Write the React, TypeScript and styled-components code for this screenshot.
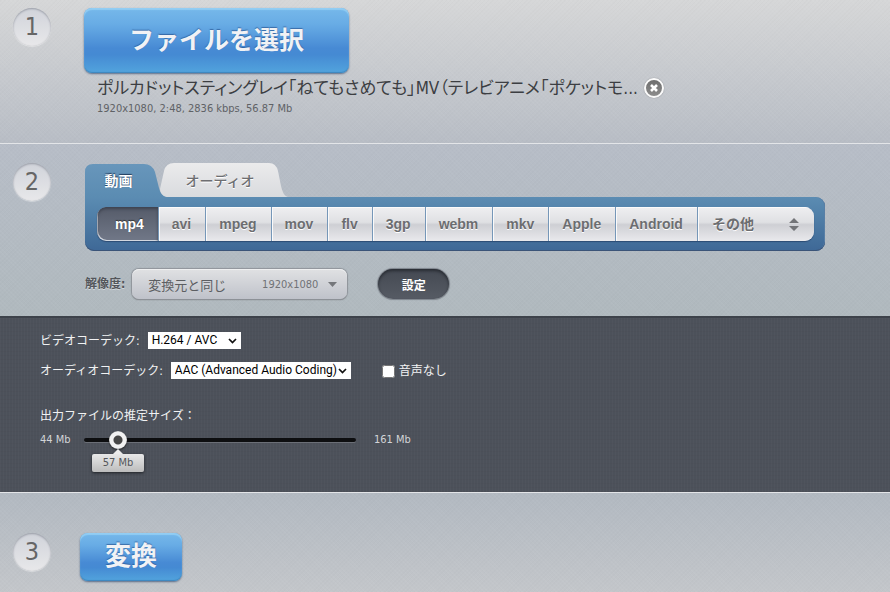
import React, { useState } from "react";
import styled, { createGlobalStyle, css } from "styled-components";

const ui = '"DejaVu Sans Condensed", "Noto Sans CJK JP", sans-serif';

const GlobalStyle = createGlobalStyle`
  *, *::before, *::after { box-sizing: border-box; }
  body {
    margin: 0;
    background: #c3c6ca;
    font-family: ${ui};
    font-size: 12px;
    line-height: 18px;
    color: #5f6266;
  }
  button, select, input { font-family: inherit; }
  button { border: 0; padding: 0; cursor: pointer; }
`;

const grain = `repeating-linear-gradient(45deg, rgba(255,255,255,0.03) 0 1px, transparent 1px 3px),
  repeating-linear-gradient(-45deg, rgba(0,0,0,0.01) 0 1px, transparent 1px 3px)`;

const Page = styled.main`
  display: flex;
  flex-direction: column;
  min-height: 100vh;
`;

const Step = styled.section<{ $from: string; $to: string; $pad: string; $gap?: number; $fill?: boolean }>`
  display: flex;
  align-items: flex-start;
  gap: ${(p) => p.$gap ?? 34}px;
  padding: ${(p) => p.$pad};
  border-top: 1px solid #e3e5e8;
  background: ${grain}, linear-gradient(${(p) => p.$from}, ${(p) => p.$to});
  ${(p) => p.$fill && css`flex: 1;`}

  &:first-child {
    border-top: 0;
  }
`;

const StepNumber = styled.div`
  flex: none;
  width: 38px;
  height: 38px;
  border-radius: 50%;
  background: linear-gradient(#d0d3da, #e8e8ea);
  box-shadow: inset 0 1px 2px rgba(70, 75, 90, 0.4), 0 1px 1px rgba(255, 255, 255, 0.4);
  color: #666;
  font-size: 25px;
  line-height: 38px;
  text-align: center;
`;

const StepBody = styled.div`
  flex: 1;
  min-width: 0;
`;

const PrimaryButton = styled.button<{ $wide?: boolean }>`
  display: block;
  padding: ${(p) => (p.$wide ? "14px 45px 19px" : "5px 25px 11px")};
  border-radius: 8px;
  background: linear-gradient(#76b8ea 0%, #68ace5 25%, #478ad4 62%, #458ad3 72%, #52a4dd 100%);
  box-shadow: inset 0 2px 1px #92cdf3, inset 0 -1px 1px #3e86bd, 0 1px 2px rgba(45, 70, 110, 0.7);
  color: #f1f2f5;
  font-family: "Noto Sans CJK JP", sans-serif;
  font-size: ${(p) => (p.$wide ? 25 : 26)}px;
  font-weight: 700;
  line-height: 32px;
  text-shadow: 0 -1px 1px rgba(30, 70, 130, 0.6);
`;

const FileRow = styled.div`
  display: flex;
  align-items: center;
  gap: 6px;
  padding: 3px 0 0 13px;
`;

const FileName = styled.span`
  overflow: hidden;
  color: #3c3e42;
  font-size: 17px;
  font-feature-settings: "palt";
  line-height: 24px;
  white-space: nowrap;
`;

const RemoveButton = styled.button`
  flex: none;
  display: grid;
  place-items: center;
  width: 20px;
  height: 20px;
  border: 2px solid #fafafa;
  border-radius: 50%;
  background: linear-gradient(#6e6e6e, #8c8c8c);
  box-shadow: 0 0 1px rgba(0, 0, 0, 0.5);
`;

const FileMeta = styled.div`
  padding-left: 13px;
  font-size: 11px;
`;

const Tabs = styled.div`
  display: flex;
  align-items: flex-end;
  height: 34px;
`;

const Tab = styled.button<{ $active?: boolean }>`
  position: relative;
  z-index: ${(p) => (p.$active ? 1 : 0)};
  width: ${(p) => (p.$active ? 81 : 131)}px;
  height: 34px;
  margin-right: ${(p) => (p.$active ? -9 : 0)}px;
  padding: ${(p) => (p.$active ? "0 14px 0 0" : "0 5px 0 0")};
  background: none;
  color: ${(p) => (p.$active ? "#fff" : "#6d6e71")};
  font-family: "Noto Sans CJK JP", sans-serif;
  font-size: 14px;
  font-weight: ${(p) => (p.$active ? 700 : 500)};
  line-height: 34px;
  text-shadow: ${(p) => (p.$active ? "0 -1px 1px #203a5a" : "0 1px 0 #fff")};
`;

const TabShape = styled.svg`
  position: absolute;
  inset: 0;
  z-index: -1;
  width: 100%;
  height: 100%;
`;

const FormatPanel = styled.div`
  max-width: 740px;
  padding: 10px 11px 10px 12px;
  border-radius: 0 9px 9px 9px;
  background: linear-gradient(#5b8cb2, #3e6896);
  box-shadow: inset 0 -1px 0 #3b5478, inset -1px 0 0 #587fa6;
`;

const FormatList = styled.div`
  display: flex;
  height: 34px;
  border-radius: 9px;
  overflow: hidden;
  background: #6c93b8;
  box-shadow: 0 1px 1px #2c4c75;
`;

const FormatButton = styled.button<{ $selected?: boolean }>`
  padding: 0 14px 0 13px;
  border-right: 1px solid #7697b8;
  box-shadow: inset 1px 1px 0 #fafafa;
  background: linear-gradient(#efeff1, #dfe0e3 45%, #cecfd4 52%, #e9e9ec);
  color: #6c6d70;
  font-family: "Liberation Sans", "Noto Sans CJK JP", sans-serif;
  font-size: 14px;
  font-weight: 700;
  line-height: 34px;
  text-shadow: 0 1px 0 #fff;
  ${(p) =>
    p.$selected &&
    css`
      padding: 0 14px 0 18px;
      border-radius: 9px 0 0 9px;
      background: linear-gradient(#555b69, #717888);
      box-shadow: inset 0 2px 3px #3e4350, inset 1px -1px 0 #d8dde5;
      color: #fff;
      text-shadow: 0 -1px 1px #333;
    `}
`;

const OtherFormats = styled(FormatButton)`
  flex: 1;
  display: flex;
  align-items: center;
  justify-content: space-between;
  padding: 0 15px 0 14px;
  border-right: 0;
`;

const OptionsRow = styled.div`
  display: flex;
  align-items: center;
  margin-top: 18px;
`;

const OptionLabel = styled.span`
  margin-right: 7px;
  color: #53565b;
  font-weight: 700;
  line-height: 20px;
  text-shadow: 0 1px 0 #d5d9dd;
`;

const ResolutionButton = styled.button`
  display: flex;
  align-items: center;
  width: 215px;
  height: 30px;
  margin-right: 31px;
  padding: 0 10px 0 16px;
  border-radius: 7px;
  background: linear-gradient(#e0e1e3, #bfc2ca);
  box-shadow: inset 0 1px 0 #eeeff0, 0 0 1px 1px #8f949b, 0 1px 1px #777;
  color: #5c5e62;
  font-size: 13px;
`;

const Dimensions = styled.span`
  margin: 0 10px 0 auto;
  color: #707276;
  font-size: 11px;
`;

const SettingsButton = styled.button`
  width: 71px;
  height: 30px;
  border-radius: 16px;
  background: linear-gradient(#444952, #565b64);
  box-shadow: inset 0 2px 3px #292d34, 0 0 1px 1px #7d838b;
  color: #fff;
  font-size: 12px;
  font-weight: 700;
`;

const Advanced = styled.section`
  padding: 14px 40px 19px 40px;
  border-top: 2px solid #3d424a;
  background: repeating-linear-gradient(90deg, rgba(255, 255, 255, 0.02) 0 1px, transparent 1px 3px),
    repeating-linear-gradient(0deg, rgba(0, 0, 0, 0.02) 0 1px, transparent 1px 4px), #4c515a;
  color: #f1f2f3;
`;

const Field = styled.div`
  display: flex;
  align-items: center;
  height: 18px;
  margin-bottom: 12px;
`;

const SelectBox = styled.div<{ $width: number }>`
  display: grid;
  grid-template-columns: 1fr 13px;
  align-items: center;
  align-self: flex-start;
  width: ${(p) => p.$width}px;
  height: 17px;
  margin-left: 8px;
  background: #fff;
`;

const CodecSelect = styled.select`
  grid-area: 1 / 1 / 2 / 3;
  appearance: none;
  height: 17px;
  padding: 0 0 0 4px;
  border: 0;
  background: transparent;
  color: #000;
  font-family: Roboto, sans-serif;
  font-size: 12px;
  line-height: 17px;
`;

const SelectArrow = styled.svg`
  grid-area: 1 / 2;
  pointer-events: none;
`;

const MuteLabel = styled.label`
  display: flex;
  align-items: center;
  gap: 4px;
  margin-left: 31px;
`;

const MuteBox = styled.input`
  width: 13px;
  height: 13px;
  margin: 0;
`;

const SizeTitle = styled.div`
  margin-top: 27px;
`;

const SizeRow = styled.div`
  display: flex;
  align-items: center;
  height: 18px;
  margin: 6px 0 24px;
  color: #d2d4d7;
  font-size: 11px;
`;

const MinSize = styled.span`
  width: 44px;
`;

const Track = styled.div`
  position: relative;
  display: flex;
  align-items: center;
  width: 272px;
  height: 18px;
  margin-right: 18px;

  &::before {
    content: "";
    position: absolute;
    inset: 7px 0;
    border-radius: 2px;
    background: #0d0e10;
    box-shadow: 0 1px 0 #6b6f77;
  }
`;

const SizeRange = styled.input`
  position: relative;
  flex: none;
  appearance: none;
  width: 280px;
  height: 18px;
  margin: 0 -4px;
  background: transparent;

  &::-webkit-slider-thumb {
    appearance: none;
    width: 18px;
    height: 18px;
    border-radius: 50%;
    background: radial-gradient(circle, #474747 0 4px, #f2f2f2 5px 8px, #c4c4c4 9px);
    box-shadow: 0 1px 2px #222;
  }
`;

const Bubble = styled.output`
  position: absolute;
  top: 23px;
  width: 52px;
  transform: translateX(-50%);
  border-radius: 2px;
  background: linear-gradient(#e8e8e8, #bcbcbc);
  box-shadow: 0 1px 3px #1f2226;
  color: #55575a;
  line-height: 18px;
  text-align: center;

  &::before {
    content: "";
    position: absolute;
    top: -5px;
    left: 21px;
    border: 5px solid transparent;
    border-top: 0;
    border-bottom-color: #ececec;
  }
`;

const formats = ["mp4", "avi", "mpeg", "mov", "flv", "3gp", "webm", "mkv", "Apple", "Android"];
const MIN = 44;
const MAX = 161;

function Codec({ id, label, value, width }: { id: string; label: string; value: string; width: number }) {
  return (
    <>
      <label htmlFor={id}>{label}</label>
      <SelectBox $width={width}>
        <CodecSelect id={id}>
          <option>{value}</option>
        </CodecSelect>
        <SelectArrow width="9" height="6" viewBox="0 0 9 6" aria-hidden="true">
          <path d="M1 1 4.500 4.500 8 1" fill="none" stroke="#111" strokeWidth="1.7" />
        </SelectArrow>
      </SelectBox>
    </>
  );
}

export default function App() {
  const [format, setFormat] = useState("mp4");
  const [size, setSize] = useState(57);
  const bubbleLeft = 5 + ((size - MIN) / (MAX - MIN)) * 262;

  return (
    <Page>
      <GlobalStyle />
      <Step $from="#d6d7d8" $to="#b8bdc5" $pad="8px 20px 25px 13px" $gap={33}>
        <StepNumber>1</StepNumber>
        <StepBody>
          <PrimaryButton $wide>ファイルを選択</PrimaryButton>
          <FileRow>
            <FileName>ポルカドットスティングレイ「ねてもさめても」MV（テレビアニメ「ポケットモ...</FileName>
            <RemoveButton aria-label="削除">
              <svg width="8" height="8" viewBox="0 0 8 8" aria-hidden="true">
                <path d="M1 1 7 7M7 1 1 7" stroke="#fff" strokeWidth="2.6" />
              </svg>
            </RemoveButton>
          </FileRow>
          <FileMeta>1920x1080, 2:48, 2836 kbps, 56.87 Mb</FileMeta>
        </StepBody>
      </Step>

      <Step $from="#b7bdc7" $to="#b0b9be" $pad="19px 20px 17px 13px">
        <StepNumber>2</StepNumber>
        <StepBody>
          <Tabs role="tablist">
            <Tab $active role="tab" aria-selected="true">
              <TabShape viewBox="0 0 81 34" aria-hidden="true">
                <defs>
                  <linearGradient id="blueTab" x1="0" y1="0" x2="0" y2="1">
                    <stop offset="0" stopColor="#6896bb" />
                    <stop offset="1" stopColor="#5b8cb2" />
                  </linearGradient>
                </defs>
                <path d="M0 34V9Q0 1 8 1H59Q67 1 70 9L74 25Q76 33 81 34Z" fill="url(#blueTab)" />
              </TabShape>
              動画
            </Tab>
            <Tab role="tab" aria-selected="false">
              <TabShape viewBox="0 0 131 34" aria-hidden="true">
                <defs>
                  <linearGradient id="greyTab" x1="0" y1="0" x2="0" y2="1">
                    <stop offset="0" stopColor="#ebebec" />
                    <stop offset="1" stopColor="#d9dbde" />
                  </linearGradient>
                </defs>
                <path d="M3 26 7 8Q9 0 17 0H112Q119 0 121 8L124 23Q126 33 131 34H10Q3 33 3 26Z" fill="url(#greyTab)" />
              </TabShape>
              オーディオ
            </Tab>
          </Tabs>
          <FormatPanel role="tabpanel">
            <FormatList>
              {formats.map((name) => (
                <FormatButton
                  key={name}
                  $selected={name === format}
                  aria-pressed={name === format}
                  onClick={() => setFormat(name)}
                >
                  {name}
                </FormatButton>
              ))}
              <OtherFormats aria-haspopup="listbox">
                その他
                <svg width="10" height="13" viewBox="0 0 10 13" aria-hidden="true">
                  <path d="M0 5 5 0 10 5ZM0 8 5 13 10 8Z" fill="#737478" />
                </svg>
              </OtherFormats>
            </FormatList>
          </FormatPanel>
          <OptionsRow>
            <OptionLabel id="resolution">解像度:</OptionLabel>
            <ResolutionButton aria-haspopup="listbox" aria-labelledby="resolution resolution-value">
              <span id="resolution-value">変換元と同じ</span>
              <Dimensions>1920x1080</Dimensions>
              <svg width="9" height="5" viewBox="0 0 9 5" aria-hidden="true">
                <path d="M0 0H9L4.500 5Z" fill="#75777b" />
              </svg>
            </ResolutionButton>
            <SettingsButton>設定</SettingsButton>
          </OptionsRow>
        </StepBody>
      </Step>

      <Advanced>
        <Field>
          <Codec id="video-codec" label="ビデオコーデック:" value="H.264 / AVC" width={93} />
        </Field>
        <Field>
          <Codec id="audio-codec" label="オーディオコーデック:" value="AAC (Advanced Audio Coding)" width={180} />
          <MuteLabel>
            <MuteBox type="checkbox" />
            音声なし
          </MuteLabel>
        </Field>
        <SizeTitle id="size-title">出力ファイルの推定サイズ：</SizeTitle>
        <SizeRow>
          <MinSize>44 Mb</MinSize>
          <Track>
            <SizeRange
              type="range"
              min={MIN}
              max={MAX}
              value={size}
              aria-labelledby="size-title"
              onChange={(e) => setSize(Number(e.target.value))}
            />
            <Bubble style={{ left: bubbleLeft }}>{size} Mb</Bubble>
          </Track>
          <span>161 Mb</span>
        </SizeRow>
      </Advanced>

      <Step $from="#b2b9c1" $to="#c3c6ca" $pad="40px 20px 11px 13px" $gap={29} $fill>
        <StepNumber>3</StepNumber>
        <StepBody>
          <PrimaryButton>変換</PrimaryButton>
        </StepBody>
      </Step>
    </Page>
  );
}
